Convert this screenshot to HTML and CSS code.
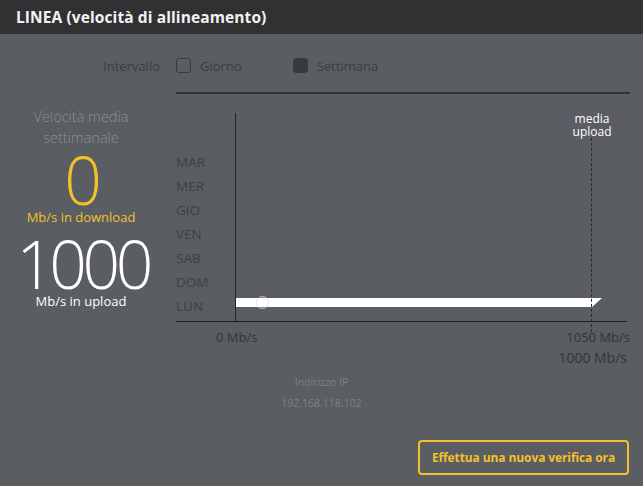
FILE: index.html
```html
<!DOCTYPE html>
<html lang="it">
<head>
<meta charset="utf-8">
<link rel="stylesheet" href="styles.css">
</head>
<body>
<header class="top"><h1 class="title">LINEA (velocità di allineamento)</h1></header>
<main class="panel">
  <div class="filter">
    <span class="filter-label">Intervallo</span>
    <div class="filter-opts">
      <span class="opt"><span class="box"></span>Giorno</span>
      <span class="opt"><span class="box box-on"></span>Settimana</span>
    </div>
  </div>
  <div class="content">
    <div class="stats">
      <div class="stats-title">Velocità media<br>settimanale</div>
      <div class="big big-down">0</div>
      <div class="unit unit-down">Mb/s in download</div>
      <div class="big big-up">1000</div>
      <div class="unit unit-up">Mb/s in upload</div>
    </div>
    <div class="chart">
      <div class="plot">
        <ul class="days">
          <li>MAR</li><li>MER</li><li>GIO</li><li>VEN</li><li>SAB</li><li>DOM</li><li>LUN</li>
        </ul>
        <div class="area">
          <div class="bar" style="width:366px"></div>
          <span class="dot"></span>
          <div class="avg" style="left:355px">
            <span class="avg-label">media<br>upload</span>
          </div>
        </div>
      </div>
      <div class="axis">
        <span class="tick-0">0 Mb/s</span>
        <span class="tick-max">1050 Mb/s</span>
      </div>
      <div class="axis-note">1000 Mb/s</div>
    </div>
  </div>
  <div class="ip">
    <div>Indirizzo IP</div>
    <div>192.168.118.102</div>
  </div>
  <div class="actions">
    <button class="btn">Effettua una nuova verifica ora</button>
  </div>
</main>
</body>
</html>
```
FILE: styles.css
```css
* { box-sizing: border-box; }
html, body { margin: 0; padding: 0; }
body {
  width: 643px;
  height: 486px;
  overflow: hidden;
  background: #5a5d61;
  font-family: "Open Sans", "Noto Sans", sans-serif;
}
.top {
  height: 34px;
  background: #313133;
  padding-left: 16px;
  display: flex;
  align-items: center;
}
.title {
  margin: 0;
  font-size: 15.5px;
  font-weight: 700;
  color: #f2f2f2;
  letter-spacing: 0.1px;
}
.panel {
  display: flex;
  flex-direction: column;
}
.filter {
  display: grid;
  grid-template-columns: 160px 1fr;
  column-gap: 16px;
  height: 58px;
  align-items: center;
  padding-top: 5px;
}
.filter-label {
  text-align: right;
  font-size: 13px;
  color: #3b3d40;
}
.filter-opts {
  display: flex;
  gap: 51px;
}
.opt {
  display: flex;
  align-items: center;
  gap: 9px;
  font-size: 13px;
  color: #3b3d40;
}
.box {
  width: 15px;
  height: 15px;
  border: 1px solid #3a3b3e;
  border-radius: 3px;
}
.box-on {
  background: #3a3a3d;
}
.content {
  display: grid;
  grid-template-columns: 162px 454px;
  column-gap: 14px;
}
.stats {
  text-align: center;
  padding-top: 14px;
}
.stats-title {
  font-size: 14.5px;
  line-height: 21px;
  color: #8c8f94;
  font-weight: 300;
}
.big {
  font-weight: 300;
  font-size: 66px;
  line-height: 58px;
  letter-spacing: -4px;
}
.big-down {
  color: #f4c12c;
  margin-top: 2px;
}
.big-up {
  color: #ffffff;
  margin-top: 8px;
  padding-left: 3px;
  letter-spacing: -4.5px;
}
.unit {
  font-size: 13px;
  line-height: 18px;
}
.unit-down { color: #f4c12c; }
.unit-up { color: #ffffff; }
.chart {
  border-top: 2px solid #333437;
  width: 454px;
}
.plot {
  display: grid;
  grid-template-columns: 59px 1fr;
  padding-top: 19px;
  width: 451px;
  border-bottom: 1px solid #1d1d1f;
}
.days {
  list-style: none;
  margin: 0;
  padding: 0 0 3px;
  display: flex;
  flex-direction: column;
  justify-content: flex-end;
  font-size: 13.5px;
  color: #3e4043;
}
.days li {
  height: 24px;
  line-height: 24px;
}
.area {
  position: relative;
  border-left: 1px solid #222325;
  height: 208px;
}
.bar {
  position: absolute;
  left: 0;
  bottom: 14px;
  height: 9px;
  background: #ffffff;
  clip-path: polygon(0 0, 100% 0, calc(100% - 10px) 100%, 0 100%);
}
.dot {
  position: absolute;
  left: 20px;
  bottom: 12px;
  width: 13px;
  height: 13px;
  border-radius: 50%;
  border: 1.5px solid rgba(215, 215, 215, 0.6);
  background: rgba(255, 255, 255, 0.2);
}
.avg {
  position: absolute;
  top: 25px;
  bottom: -11px;
  border-left: 1px dashed #2a2b2d;
}
.avg-label {
  position: absolute;
  left: 0;
  bottom: 100%;
  transform: translateX(-50%);
  text-align: center;
  font-size: 12px;
  line-height: 13px;
  color: #ffffff;
  white-space: nowrap;
  margin-bottom: 0;
}
.axis {
  display: flex;
  justify-content: space-between;
  padding-left: 40px;
  font-size: 13px;
  line-height: 18px;
  color: #333538;
  margin-top: 6px;
}
.axis-note {
  text-align: right;
  padding-right: 3px;
  font-size: 14px;
  line-height: 18px;
  color: #333538;
  margin-top: 3px;
}
.ip {
  text-align: center;
  font-size: 10.5px;
  line-height: 21px;
  color: #7e8186;
  margin-top: 5px;
}
.actions {
  display: flex;
  justify-content: flex-end;
  padding-right: 14px;
  margin-top: 26px;
}
.btn {
  width: 211px;
  height: 35px;
  border: 2px solid #f4c12c;
  border-radius: 4px;
  background: transparent;
  color: #f4c12c;
  font-family: inherit;
  font-weight: 700;
  font-size: 12px;
  letter-spacing: -0.1px;
  padding: 0;
}
```
